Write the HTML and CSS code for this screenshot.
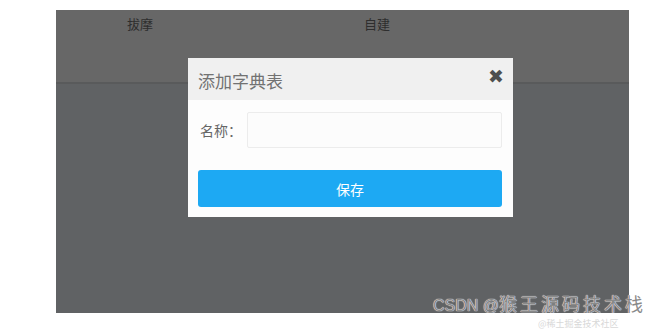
FILE: index.html
```html
<!DOCTYPE html>
<html>
<head>
<meta charset="utf-8">
<title>添加字典表</title>
<link rel="stylesheet" href="styles.css">
</head>
<body>
  <div class="screen">
    <div class="table-head">
      <div class="cell cell-first">拔摩</div>
      <div class="cell cell-second">自建</div>
    </div>
    <div class="table-body"></div>

    <div class="modal">
      <div class="modal-header">
        <span class="modal-title">添加字典表</span>
        <span class="modal-close">&#x2716;</span>
      </div>
      <div class="modal-body">
        <div class="form-row">
          <label class="form-label">名称：</label>
          <input class="form-input" type="text">
        </div>
        <button class="save-button">保存</button>
      </div>
    </div>
  </div>

  <div class="watermark">
    <div class="mark-main">CSDN @<span class="mark-cjk">猴王源码技术栈</span></div>
    <div class="mark-ghost">@稀土掘金技术社区</div>
  </div>
</body>
</html>
```

FILE: styles.css
```css
body {
  margin: 0;
  background-color: #fff;
  font-family: "Noto Sans CJK SC", "Liberation Sans", sans-serif;
  width: 661px;
  height: 329px;
  overflow: hidden;
  position: relative;
}

.screen {
  position: relative;
  margin: 10px 0 0 56px;
  width: 573px;
  height: 303px;
  background-color: #606264;
  display: flex;
  flex-direction: column;
}

.table-head {
  height: 72px;
  background-color: #676767;
  border-bottom: 2px solid #595a5b;
  display: flex;
}

.cell {
  font-size: 13px;
  line-height: 27px;
  color: #2e2e2e;
  text-align: center;
}

.cell-first {
  width: 168px;
}

.cell-second {
  width: 306px;
}

.table-body {
  flex: 1;
}

/* dialog sits over the table */
.modal {
  position: absolute;
  left: 132px;
  top: 48px;
  width: 325px;
  height: 159px;
  background-color: #fdfdfd;
  display: flex;
  flex-direction: column;
}

.modal-header {
  height: 42px;
  background-color: #f0f0f0;
  display: flex;
  align-items: center;
  justify-content: space-between;
  padding: 0 9px 0 10px;
}

.modal-title {
  font-size: 17px;
  color: #727272;
  margin-top: 2px;
}

.modal-close {
  font-family: "DejaVu Sans", sans-serif;
  font-size: 19px;
  color: #4f4f4f;
  margin-top: -7px;
}

.modal-body {
  padding: 12px 11px 10px 10px;
  display: flex;
  flex-direction: column;
}

.form-row {
  display: flex;
  align-items: center;
}

.form-label {
  width: 47px;
  font-size: 14px;
  color: #666;
  padding-left: 2px;
}

.form-input {
  flex: 1;
  height: 36px;
  box-sizing: border-box;
  border: 1px solid #ececec;
  border-radius: 2px;
  background-color: #fcfcfc;
  outline: none;
}

.save-button {
  margin-top: 22px;
  height: 37px;
  border: none;
  border-radius: 3px;
  background-color: #1da9f3;
  color: #fff;
  font-family: "Noto Sans CJK SC", sans-serif;
  font-size: 14px;
}

/* CSDN watermark */
.watermark {
  position: absolute;
  left: 433px;
  top: 295px;
}

.mark-main {
  font-family: "Liberation Sans", "Noto Sans CJK SC", sans-serif;
  font-size: 16px;
  line-height: 17px;
  height: 17px;
  white-space: nowrap;
  color: #8a8a8a;
  text-shadow: 0 0 1px #fff, 0 0 1px #fff;
}

.mark-cjk {
  font-family: "Noto Sans CJK SC", sans-serif;
  font-size: 18px;
  letter-spacing: 3px;
}

.mark-ghost {
  margin: 7px 0 0 105px;
  white-space: nowrap;
  font-size: 9px;
  line-height: 10px;
  color: #d8d8d8;
}
```
